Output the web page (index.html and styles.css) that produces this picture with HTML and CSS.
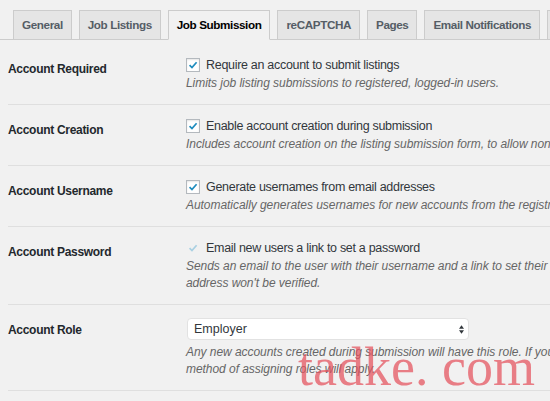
FILE: index.html
```html
<!DOCTYPE html>
<html>
<head>
<meta charset="utf-8">
<link rel="stylesheet" href="styles.css">
</head>
<body>
<div class="page">
  <nav class="tabs">
    <span class="tab">General</span>
    <span class="tab">Job Listings</span>
    <span class="tab active">Job Submission</span>
    <span class="tab">reCAPTCHA</span>
    <span class="tab">Pages</span>
    <span class="tab">Email Notifications</span>
    <span class="tab">Job Visibility</span>
  </nav>

  <div class="rows">
    <div class="row first">
      <div class="label">Account Required</div>
      <div class="field">
        <label class="check"><span class="box"><svg viewBox="0 0 14 14"><path d="M3 7.2 L5.8 10 L11.2 3.8"/></svg></span>Require an account to submit listings</label>
        <p class="desc">Limits job listing submissions to registered, logged-in users.</p>
      </div>
    </div>

    <div class="row">
      <div class="label">Account Creation</div>
      <div class="field">
        <label class="check"><span class="box"><svg viewBox="0 0 14 14"><path d="M3 7.2 L5.8 10 L11.2 3.8"/></svg></span>Enable account creation during submission</label>
        <p class="desc">Includes account creation on the listing submission form, to allow non-registered users to create an account.</p>
      </div>
    </div>

    <div class="row">
      <div class="label">Account Username</div>
      <div class="field">
        <label class="check"><span class="box"><svg viewBox="0 0 14 14"><path d="M3 7.2 L5.8 10 L11.2 3.8"/></svg></span>Generate usernames from email addresses</label>
        <p class="desc">Automatically generates usernames for new accounts from the registrant's email address.</p>
      </div>
    </div>

    <div class="row">
      <div class="label">Account Password</div>
      <div class="field">
        <label class="check faded"><span class="box"><svg viewBox="0 0 14 14"><path d="M3 7.2 L5.8 10 L11.2 3.8"/></svg></span>Email new users a link to set a password</label>
        <p class="desc">Sends an email to the user with their username and a link to set their password. If this is turned off, the email<br>address won't be verified.</p>
      </div>
    </div>

    <div class="row">
      <div class="label">Account Role</div>
      <div class="field">
        <div class="select"><span>Employer</span><span class="arrows"><svg viewBox="0 0 6 10"><path d="M3 0 L6 4 L0 4 Z M0 6 L6 6 L3 10 Z"/></svg></span></div>
        <p class="desc">Any new accounts created during submission will have this role. If you haven't enabled account creation, your own<br>method of assigning roles will apply.</p>
      </div>
    </div>
  </div>

  <div class="watermark">tadke. com</div>
</div>
</body>
</html>
```

FILE: styles.css
```css
html, body {
  margin: 0;
  padding: 0;
  background: #f1f1f1;
  overflow: hidden;
}
.page {
  position: relative;
  width: 550px;
  height: 401px;
  overflow: hidden;
  font-family: "Liberation Sans", Arial, sans-serif;
  color: #23282d;
}
.tabs {
  display: flex;
  gap: 7px;
  padding: 10px 0 0 13px;
  border-bottom: 1px solid #cccccc;
  height: 29px;
  white-space: nowrap;
}
.tab {
  box-sizing: border-box;
  height: 30px;
  padding: 0 8px;
  line-height: 28px;
  font-size: 11.7px;
  letter-spacing: -0.4px;
  font-weight: bold;
  color: #555d66;
  background: #e5e5e5;
  border: 1px solid #cccccc;
  flex-shrink: 0;
}
.tab.active {
  background: #f1f1f1;
  color: #000;
  border-bottom-color: #f1f1f1;
}
.rows {
  padding: 0 0 0 8px;
}
.row {
  display: flex;
  padding: 11px 0 12px;
  border-bottom: 1px solid #dfdfdf;
  white-space: nowrap;
}
.row.first {
  padding-top: 15px;
}
.label {
  width: 178px;
  flex-shrink: 0;
  padding-top: 4px;
  line-height: 20px;
  font-size: 12px;
  letter-spacing: -0.3px;
  font-weight: bold;
  color: #23282d;
}
.field {
  font-size: 12.5px;
  color: #32373c;
}
.check {
  display: flex;
  align-items: center;
  height: 20px;
  gap: 6px;
  letter-spacing: -0.3px;
}
.box {
  box-sizing: border-box;
  width: 14px;
  height: 14px;
  background: #fff;
  border: 1px solid #b4b9be;
  box-shadow: inset 0 1px 2px rgba(0,0,0,0.1);
  display: flex;
}
.box svg {
  width: 12px;
  height: 12px;
}
.box path {
  fill: none;
  stroke: #1e8cbe;
  stroke-width: 2;
}
.faded .box {
  background: transparent;
  border-color: transparent;
  box-shadow: none;
}
.faded .box path {
  stroke: #a9d0e2;
}
.desc {
  margin: 0;
  font-style: italic;
  font-size: 12px;
  line-height: 17px;
  letter-spacing: -0.05px;
  color: #666;
}
.select {
  box-sizing: border-box;
  width: 282px;
  height: 22px;
  margin: 2px 0 4px 1px;
  background: #fff;
  border: 1px solid #e2e2e2;
  border-radius: 4px;
  display: flex;
  align-items: center;
  justify-content: space-between;
  padding: 0 4px 0 6px;
  font-size: 12.5px;
  color: #32373c;
}
.arrows svg {
  display: block;
  width: 5px;
  height: 9px;
  fill: #32373c;
}
.watermark {
  position: absolute;
  left: 298px;
  top: 337px;
  font-family: "Liberation Serif", "Times New Roman", serif;
  font-size: 54px;
  line-height: 60px;
  color: rgba(228, 80, 92, 0.72);
  white-space: nowrap;
  pointer-events: none;
}
```
